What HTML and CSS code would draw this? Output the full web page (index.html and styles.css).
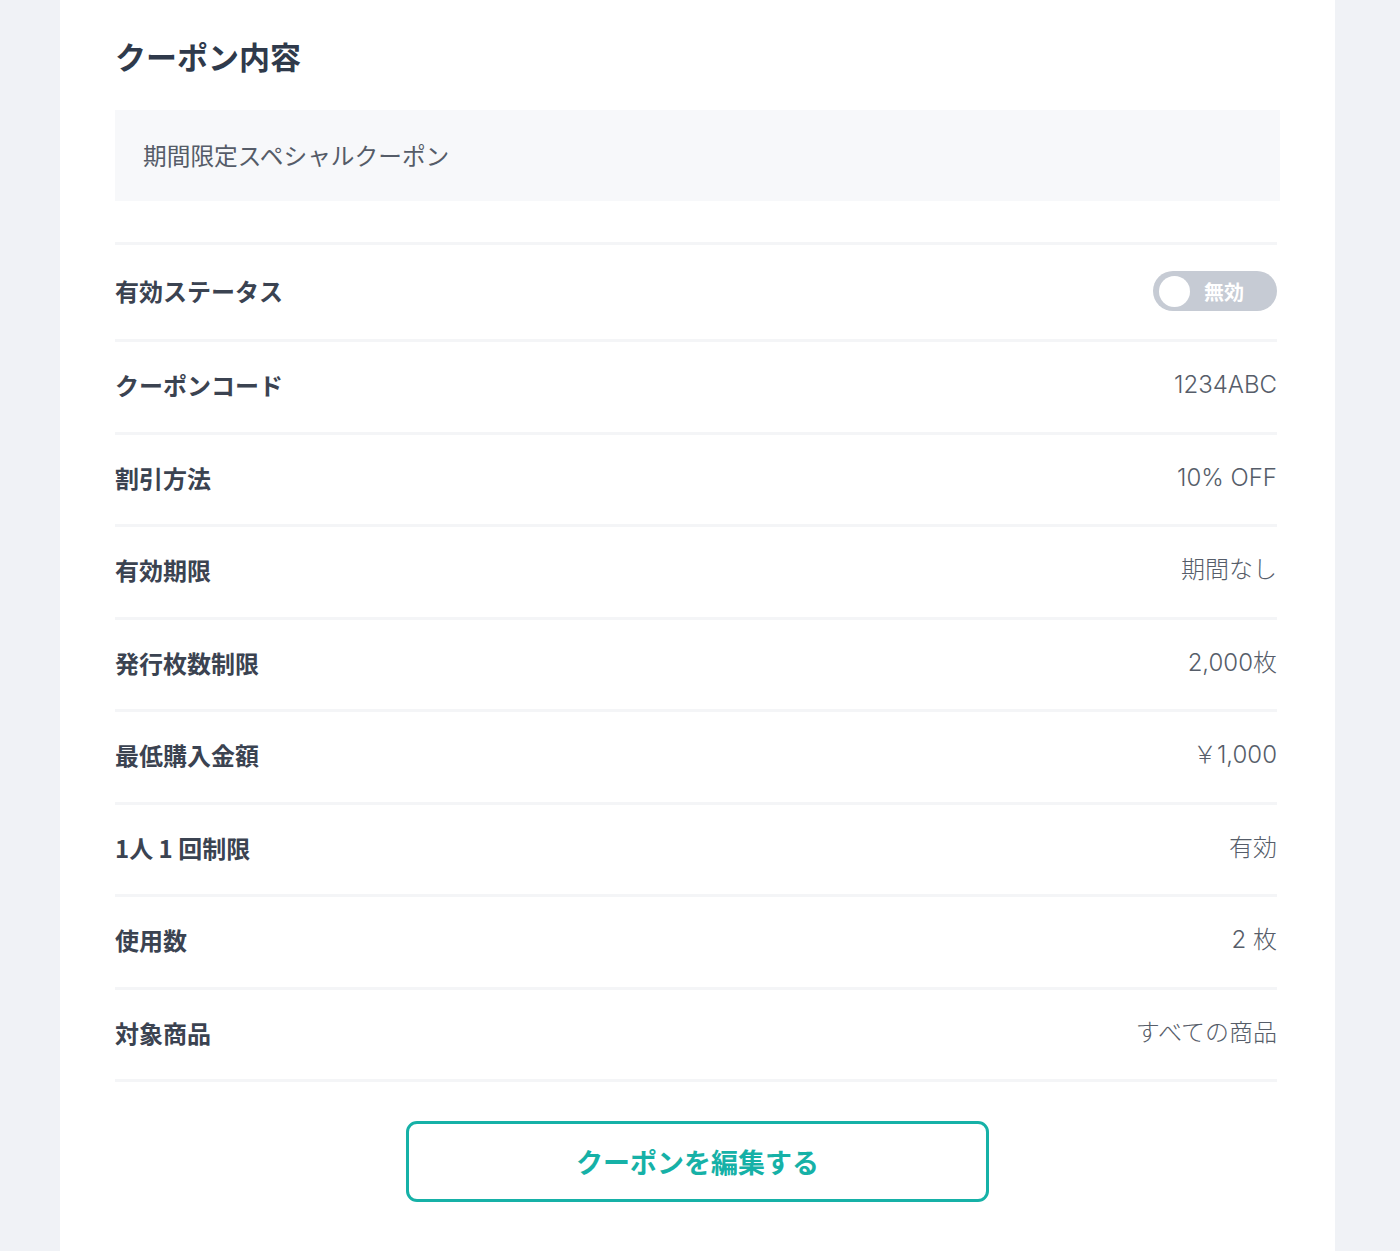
FILE: index.html
```html
<!DOCTYPE html>
<html lang="ja">
<head>
<meta charset="utf-8">
<title>クーポン内容</title>
<link rel="stylesheet" href="styles.css">
</head>
<body>
<main class="card">
  <h1 class="title">クーポン内容</h1>
  <div class="name-box">期間限定スペシャルクーポン</div>
  <ul class="list">
    <li class="row row-toggle">
      <span class="label">有効ステータス</span>
      <span class="toggle"><span class="knob"></span><span class="toggle-text">無効</span></span>
    </li>
    <li class="row"><span class="label">クーポンコード</span><span class="value">1234ABC</span></li>
    <li class="row"><span class="label">割引方法</span><span class="value">10% OFF</span></li>
    <li class="row"><span class="label">有効期限</span><span class="value">期間なし</span></li>
    <li class="row"><span class="label">発行枚数制限</span><span class="value">2,000枚</span></li>
    <li class="row"><span class="label">最低購入金額</span><span class="value">￥1,000</span></li>
    <li class="row"><span class="label">1人 1 回制限</span><span class="value">有効</span></li>
    <li class="row"><span class="label">使用数</span><span class="value">2 枚</span></li>
    <li class="row"><span class="label">対象商品</span><span class="value">すべての商品</span></li>
  </ul>
  <div class="actions">
    <button class="edit-btn" type="button">クーポンを編集する</button>
  </div>
</main>
</body>
</html>
```

FILE: styles.css
```css
html, body {
  margin: 0;
  padding: 0;
}
body {
  background: #f0f2f6;
  font-family: "Noto Sans CJK JP", "Noto Sans", sans-serif;
  color: #3b4351;
}
.card {
  box-sizing: border-box;
  margin-left: 60px;
  width: 1275px;
  min-height: 1251px;
  background: #ffffff;
  padding: 34px 55px 40px 55px;
}
.title {
  margin: 0;
  font-size: 31px;
  line-height: 44px;
  font-weight: 700;
  color: #2f3a4b;
}
.name-box {
  margin-top: 32px;
  height: 91px;
  box-sizing: border-box;
  background: #f7f8fa;
  padding-left: 28px;
  padding-bottom: 2px;
  display: flex;
  align-items: center;
  font-size: 23.7px;
  color: #555c68;
}
.list {
  list-style: none;
  margin: 41px 3px 0 0;
  padding: 0;
  border-top: 3px solid #f4f5f7;
}
.row {
  display: flex;
  align-items: center;
  justify-content: space-between;
  padding: 25px 0 29px;
  min-height: 35.5px;
  border-bottom: 3px solid #f4f5f7;
}
.row-toggle {
  padding: 26px 0 28px;
}
.label {
  font-size: 24px;
  font-weight: 700;
  line-height: 35.5px;
  color: #3b4351;
}
.value {
  font-family: "Inter", "Noto Sans CJK JP", sans-serif;
  font-size: 24px;
  font-weight: 300;
  line-height: 35.5px;
  color: #565d69;
}
.toggle {
  box-sizing: border-box;
  width: 124px;
  height: 40px;
  border-radius: 20px;
  background: #c6cbd4;
  display: flex;
  align-items: center;
  padding-left: 6px;
}
.knob {
  width: 31px;
  height: 31px;
  border-radius: 50%;
  background: #ffffff;
}
.toggle-text {
  margin-left: 14px;
  color: #ffffff;
  font-size: 20px;
  font-weight: 700;
}
.actions {
  display: flex;
  justify-content: center;
  margin-top: 39px;
}
.edit-btn {
  width: 583px;
  height: 81px;
  box-sizing: border-box;
  border: 3px solid #16b1a7;
  border-radius: 11px;
  background: #ffffff;
  color: #16b1a7;
  font-family: "Noto Sans CJK JP", "Noto Sans", sans-serif;
  font-size: 27px;
  font-weight: 700;
  padding: 0;
  cursor: pointer;
}
```
